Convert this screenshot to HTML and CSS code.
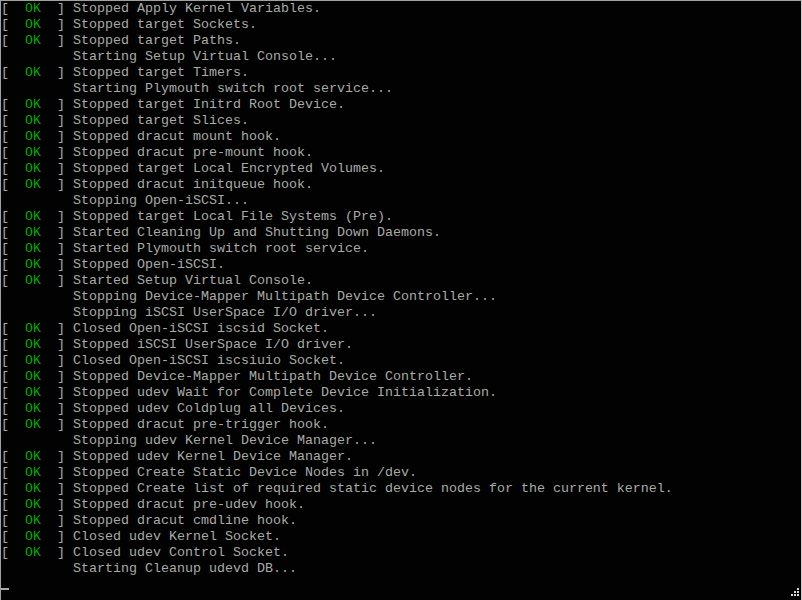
FILE: index.html
```html
<!DOCTYPE html>
<html>
<head>
<meta charset="utf-8">
<link rel="stylesheet" href="styles.css">
</head>
<body>
<div class="screen">
<pre class="console">[  <span class="ok">OK</span>  ] Stopped Apply Kernel Variables.
[  <span class="ok">OK</span>  ] Stopped target Sockets.
[  <span class="ok">OK</span>  ] Stopped target Paths.
         Starting Setup Virtual Console...
[  <span class="ok">OK</span>  ] Stopped target Timers.
         Starting Plymouth switch root service...
[  <span class="ok">OK</span>  ] Stopped target Initrd Root Device.
[  <span class="ok">OK</span>  ] Stopped target Slices.
[  <span class="ok">OK</span>  ] Stopped dracut mount hook.
[  <span class="ok">OK</span>  ] Stopped dracut pre-mount hook.
[  <span class="ok">OK</span>  ] Stopped target Local Encrypted Volumes.
[  <span class="ok">OK</span>  ] Stopped dracut initqueue hook.
         Stopping Open-iSCSI...
[  <span class="ok">OK</span>  ] Stopped target Local File Systems (Pre).
[  <span class="ok">OK</span>  ] Started Cleaning Up and Shutting Down Daemons.
[  <span class="ok">OK</span>  ] Started Plymouth switch root service.
[  <span class="ok">OK</span>  ] Stopped Open-iSCSI.
[  <span class="ok">OK</span>  ] Started Setup Virtual Console.
         Stopping Device-Mapper Multipath Device Controller...
         Stopping iSCSI UserSpace I/O driver...
[  <span class="ok">OK</span>  ] Closed Open-iSCSI iscsid Socket.
[  <span class="ok">OK</span>  ] Stopped iSCSI UserSpace I/O driver.
[  <span class="ok">OK</span>  ] Closed Open-iSCSI iscsiuio Socket.
[  <span class="ok">OK</span>  ] Stopped Device-Mapper Multipath Device Controller.
[  <span class="ok">OK</span>  ] Stopped udev Wait for Complete Device Initialization.
[  <span class="ok">OK</span>  ] Stopped udev Coldplug all Devices.
[  <span class="ok">OK</span>  ] Stopped dracut pre-trigger hook.
         Stopping udev Kernel Device Manager...
[  <span class="ok">OK</span>  ] Stopped udev Kernel Device Manager.
[  <span class="ok">OK</span>  ] Stopped Create Static Device Nodes in /dev.
[  <span class="ok">OK</span>  ] Stopped Create list of required static device nodes for the current kernel.
[  <span class="ok">OK</span>  ] Stopped dracut pre-udev hook.
[  <span class="ok">OK</span>  ] Stopped dracut cmdline hook.
[  <span class="ok">OK</span>  ] Closed udev Kernel Socket.
[  <span class="ok">OK</span>  ] Closed udev Control Socket.
         Starting Cleanup udevd DB...
<span class="cursor"></span></pre>
<div class="grip">
<svg width="10" height="10" viewBox="0 0 10 10"><g fill="#d8d8d8"><rect x="8" y="0" width="2" height="2"/><rect x="5" y="3" width="2" height="2"/><rect x="8" y="3" width="2" height="2"/><rect x="2" y="6" width="2" height="2"/><rect x="5" y="6" width="2" height="2"/><rect x="8" y="6" width="2" height="2"/></g></svg>
</div>
</div>
</body>
</html>
```
FILE: styles.css
```css
html, body {
  margin: 0;
  padding: 0;
  background: #000;
  width: 802px;
  height: 600px;
  overflow: hidden;
}
.screen {
  position: relative;
  box-sizing: border-box;
  width: 802px;
  height: 600px;
  background: #020202;
  border-top: 1px solid #a0a0a0;
  border-left: 1px solid #a0a0a0;
  border-right: 1px solid #c8c8c8;
}
.console {
  margin: 0;
  padding: 0 0 0 0;
  font-family: "Liberation Mono", "DejaVu Sans Mono", monospace;
  font-size: 13.333px;
  line-height: 16px;
  color: #aaaaaa;
  white-space: pre;
}
.ok {
  color: #00aa00;
}
.cursor {
  display: inline-block;
  width: 8px;
  height: 2px;
  background: #aaaaaa;
  vertical-align: -2px;
}
.grip {
  position: absolute;
  right: 2px;
  bottom: 2px;
  line-height: 0;
}
```
